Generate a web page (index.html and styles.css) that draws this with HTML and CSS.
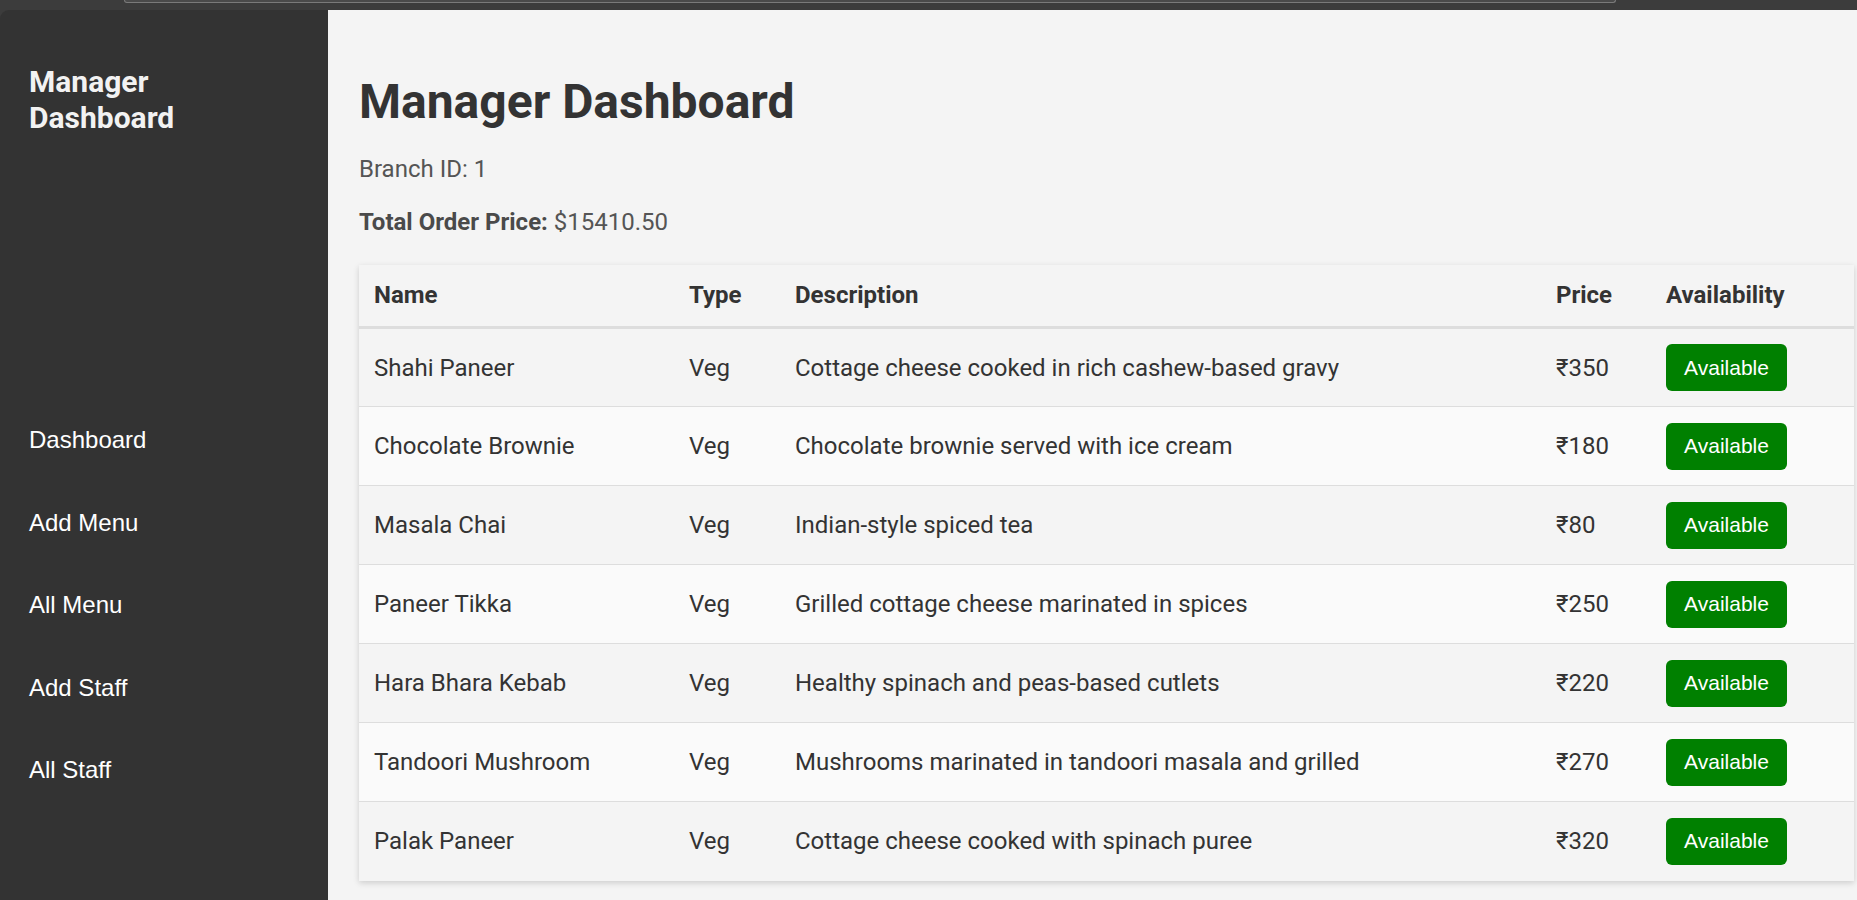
FILE: index.html
```html
<!DOCTYPE html>
<html lang="en">
<head>
<meta charset="utf-8">
<title>Manager Dashboard</title>
<link rel="stylesheet" href="styles.css">
</head>
<body>
<div class="chrome"><div class="addr"></div></div>
<div class="app">
  <aside class="sidebar">
    <h2 class="brand">Manager<br>Dashboard</h2>
    <nav class="nav">
      <a href="#">Dashboard</a>
      <a href="#">Add Menu</a>
      <a href="#">All Menu</a>
      <a href="#">Add Staff</a>
      <a href="#">All Staff</a>
    </nav>
  </aside>
  <main class="main">
    <h1 class="title">Manager Dashboard</h1>
    <p class="info">Branch ID: 1</p>
    <p class="info"><strong>Total Order Price:</strong> $15410.50</p>
    <table class="menu">
      <colgroup>
        <col class="c-name"><col class="c-type"><col class="c-desc"><col class="c-price"><col class="c-avail">
      </colgroup>
      <thead>
        <tr><th>Name</th><th>Type</th><th>Description</th><th>Price</th><th>Availability</th></tr>
      </thead>
      <tbody>
        <tr><td>Shahi Paneer</td><td>Veg</td><td>Cottage cheese cooked in rich cashew-based gravy</td><td>₹350</td><td><button class="avail">Available</button></td></tr>
        <tr><td>Chocolate Brownie</td><td>Veg</td><td>Chocolate brownie served with ice cream</td><td>₹180</td><td><button class="avail">Available</button></td></tr>
        <tr><td>Masala Chai</td><td>Veg</td><td>Indian-style spiced tea</td><td>₹80</td><td><button class="avail">Available</button></td></tr>
        <tr><td>Paneer Tikka</td><td>Veg</td><td>Grilled cottage cheese marinated in spices</td><td>₹250</td><td><button class="avail">Available</button></td></tr>
        <tr><td>Hara Bhara Kebab</td><td>Veg</td><td>Healthy spinach and peas-based cutlets</td><td>₹220</td><td><button class="avail">Available</button></td></tr>
        <tr><td>Tandoori Mushroom</td><td>Veg</td><td>Mushrooms marinated in tandoori masala and grilled</td><td>₹270</td><td><button class="avail">Available</button></td></tr>
        <tr><td>Palak Paneer</td><td>Veg</td><td>Cottage cheese cooked with spinach puree</td><td>₹320</td><td><button class="avail">Available</button></td></tr>
      </tbody>
    </table>
  </main>
</div>
</body>
</html>
```
FILE: styles.css
```css
* { box-sizing: border-box; }
html, body { margin: 0; padding: 0; }
body {
  width: 1857px;
  height: 900px;
  overflow: hidden;
  background: #3c3c3c;
  font-family: Roboto, "Liberation Sans", sans-serif;
  color: #333;
}
.chrome {
  height: 10px;
  background: #3c3c3c;
  display: flex;
}
.addr {
  margin-left: 124px;
  width: 1492px;
  height: 3px;
  border: 1px solid #7a7a7a;
  border-top: none;
  border-radius: 0 0 14px 14px;
  background: #4a4a4a;
}
.app {
  display: flex;
  height: 890px;
}
.sidebar {
  width: 328px;
  flex: none;
  background: #333;
  border-top-left-radius: 9px;
  padding: 54px 20px 0 29px;
  display: flex;
  flex-direction: column;
}
.brand {
  margin: 0;
  font-family: Roboto, "Liberation Sans", sans-serif;
  font-weight: 700;
  font-size: 30px;
  line-height: 36px;
  color: #f2f2f2;
}
.nav {
  margin-top: 290px;
  display: flex;
  flex-direction: column;
  gap: 54.5px;
}
.nav a {
  font-family: "Liberation Sans", Arial, sans-serif;
  font-size: 24px;
  line-height: 28px;
  color: #fff;
  text-decoration: none;
}
.main {
  flex: 1;
  background: #f4f4f4;
  padding: 64px 0 0 31px;
}
.title {
  margin: 0 0 25px;
  font-size: 48px;
  line-height: 56px;
  font-weight: 700;
  color: #333;
}
.info {
  margin: 0 0 25px;
  font-size: 24px;
  line-height: 28px;
  color: #555;
}
.info strong { font-weight: 700; color: #4a4a4a; }
.info + .info { margin-bottom: 29px; }
.menu {
  width: 1495px;
  table-layout: fixed;
  border-collapse: collapse;
  background: #f4f4f4;
  box-shadow: 0 2px 6px rgba(0, 0, 0, 0.16);
  font-size: 24px;
}
.c-name { width: 315px; }
.c-type { width: 106px; }
.c-desc { width: 761px; }
.c-price { width: 110px; }
.c-avail { width: 203px; }
.menu th {
  text-align: left;
  font-weight: 700;
  color: #333;
  padding: 16px 15px 17px;
  line-height: 28px;
  background: #f4f4f4;
  border-bottom: 3px solid #ddd;
}
.menu td {
  padding: 15px;
  height: 79px;
  line-height: 28px;
  color: #333;
  border-bottom: 1px solid #ddd;
  vertical-align: middle;
  white-space: nowrap;
}
.menu tbody tr:nth-child(odd) { background: #f4f4f4; }
.menu tbody tr:nth-child(even) { background: #fafafa; }
.menu tbody tr:last-child td { border-bottom: none; }
.avail {
  display: block;
  width: 121px;
  height: 47px;
  border: none;
  border-radius: 6px;
  background: #008000;
  color: #fff;
  font-family: "Liberation Sans", Arial, sans-serif;
  font-size: 21px;
  padding: 0;
  cursor: pointer;
}
```
